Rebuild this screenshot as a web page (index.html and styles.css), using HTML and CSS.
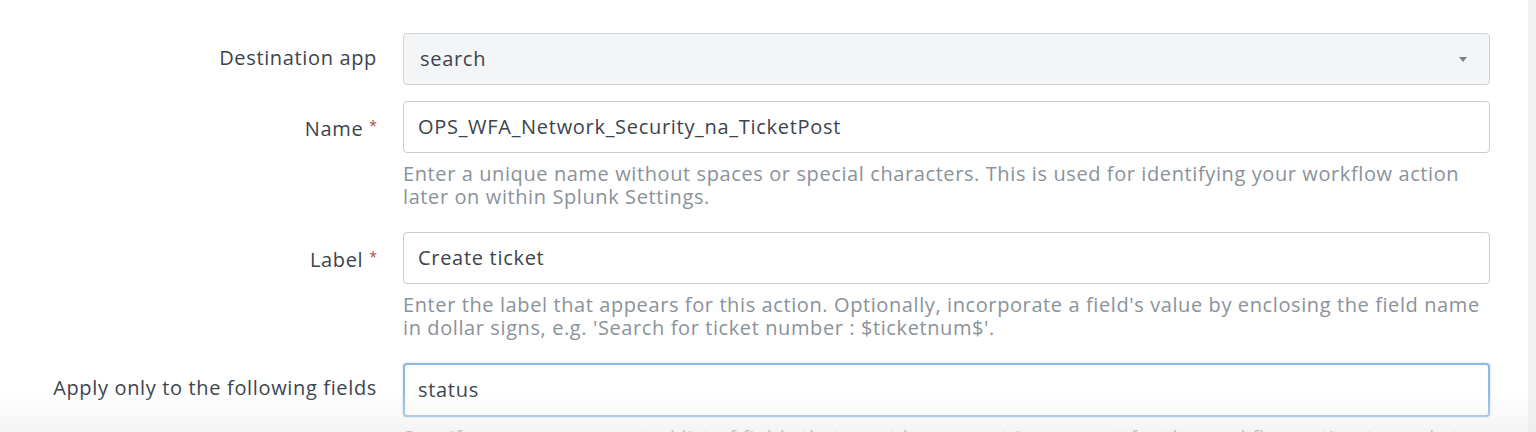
FILE: index.html
```html
<!DOCTYPE html>
<html>
<head>
<meta charset="utf-8">
<link rel="stylesheet" href="styles.css">
</head>
<body>
<div class="page">
  <main class="form">
    <div class="row">
      <label class="label">Destination app</label>
      <div class="field">
        <div class="select">
          <span>search</span>
          <span class="caret"></span>
        </div>
      </div>
    </div>
    <div class="row">
      <label class="label">Name<span class="req">*</span></label>
      <div class="field">
        <div class="input">OPS_WFA_Network_Security_na_TicketPost</div>
        <p class="help">Enter a unique name without spaces or special characters. This is used for identifying your workflow action later on within Splunk Settings.</p>
      </div>
    </div>
    <div class="row">
      <label class="label">Label<span class="req">*</span></label>
      <div class="field">
        <div class="input">Create ticket</div>
        <p class="help">Enter the label that appears for this action. Optionally, incorporate a field's value by enclosing the field name in dollar signs, e.g. 'Search for ticket number : $ticketnum$'.</p>
      </div>
    </div>
    <div class="row">
      <label class="label">Apply only to the following fields</label>
      <div class="field">
        <div class="input focus">status</div>
        <p class="help">Specify a comma-separated list of fields that must be present in an event for the workflow action to apply to it.</p>
      </div>
    </div>
  </main>
  <aside class="strip"></aside>
</div>
<div class="fade"></div>
</body>
</html>
```
FILE: styles.css
```css
html, body {
  margin: 0;
  padding: 0;
  background: #ffffff;
  overflow: hidden;
}
body {
  font-family: "Open Sans", "Liberation Sans", sans-serif;
  color: #3c444d;
  height: 432px;
}
.page {
  display: flex;
  height: 432px;
}
.form {
  width: 1528px;
  padding-top: 33px;
  display: flex;
  flex-direction: column;
  gap: 16px;
}
.strip {
  flex: 1;
  background: #f1f2f3;
}
.row {
  display: grid;
  grid-template-columns: 377px 1087px;
  column-gap: 26px;
  align-items: start;
}
.label {
  text-align: right;
  font-size: 20px;
  letter-spacing: 0.65px;
  line-height: 50px;
  color: #3c444d;
  white-space: nowrap;
}
.req {
  color: #b5474b;
  font-size: 14px;
  vertical-align: 5px;
  margin-left: 6px;
  letter-spacing: 0;
}
.select, .input {
  box-sizing: border-box;
  height: 52px;
  border: 1px solid #c8cdd3;
  border-radius: 4px;
  font-size: 20px;
  letter-spacing: 0.7px;
  display: flex;
  align-items: center;
  padding: 0 14px 1px 14px;
  color: #3c444d;
}
.select {
  background: #f3f5f6;
  justify-content: space-between;
  padding: 0 22px 2px 16px;
  border-color: #cfd4d9;
}
.caret {
  width: 0;
  height: 0;
  border-left: 4px solid transparent;
  border-right: 4px solid transparent;
  border-top: 5px solid #7a7f85;
  margin-top: 3px;
}
.input {
  background: #ffffff;
}
.input.focus {
  border: 2px solid #8fb8e3;
  box-shadow: 0 0 2px rgba(110, 160, 220, 0.5);
  padding-left: 13px;
  height: 54px;
}
.help {
  margin: 9px 0 8px 0;
  font-size: 20px;
  letter-spacing: 0.6px;
  line-height: 23px;
  color: #8a929a;
  padding-right: 8px;
}
.fade {
  position: fixed;
  left: 0;
  right: 0;
  bottom: 0;
  height: 40px;
  pointer-events: none;
  background: linear-gradient(to bottom, rgba(235, 235, 235, 0), rgba(235, 235, 235, 0.55));
}
```
